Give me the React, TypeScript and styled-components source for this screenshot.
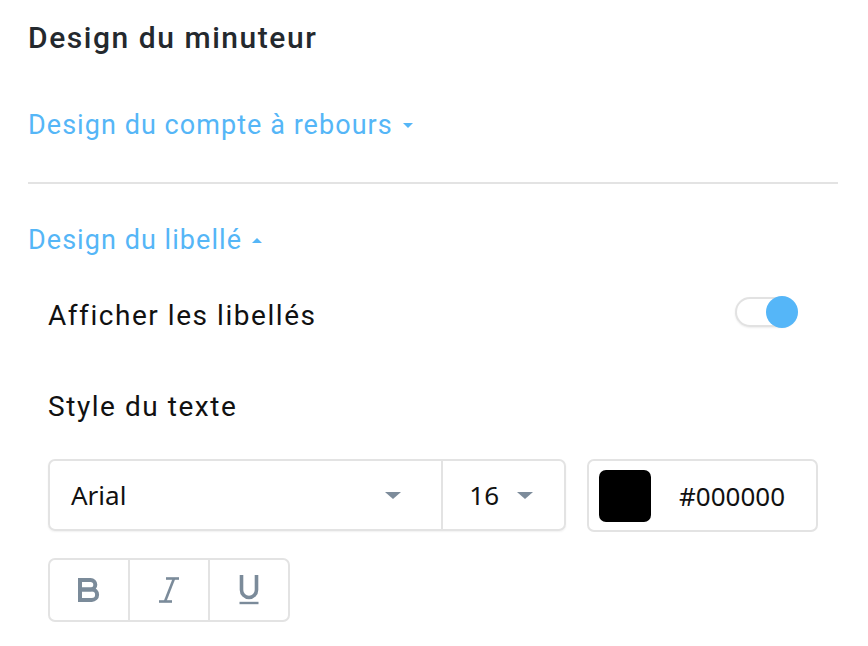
import React, { useState } from "react";
import styled, { createGlobalStyle } from "styled-components";

const Global = createGlobalStyle`
  html, body { margin: 0; padding: 0; background: #fff; }
  body { font-family: Roboto, "Noto Sans", sans-serif; }
  * { box-sizing: border-box; }
`;

const Page = styled.div`
  width: 868px;
  padding: 18px 30px 20px 28px;
`;

const Title = styled.h1`
  margin: 0;
  font-family: Roboto, sans-serif;
  font-size: 30px;
  letter-spacing: 1.55px;
  font-weight: 500;
  line-height: 40px;
  color: #24292e;
`;

const Section = styled.div<{ $divider?: boolean }>`
  border-bottom: ${(p) => (p.$divider ? "2px solid #e3e3e3" : "none")};
`;

const AccordionHeader = styled.button<{ $top: number; $bottom?: number }>`
  display: flex;
  align-items: center;
  gap: 10px;
  padding: 0;
  margin: ${(p) => p.$top}px 0 ${(p) => p.$bottom ?? 0}px 0;
  border: none;
  background: none;
  cursor: pointer;
  font-family: Roboto, sans-serif;
  font-size: 27px;
  letter-spacing: 1.05px;
  font-weight: 400;
  color: #55b6f7;
  height: 56px;
`;

const Caret = styled.span<{ $up?: boolean; $color: string; $w?: number; $h?: number }>`
  display: inline-block;
  width: 0;
  height: 0;
  border-left: ${(p) => p.$w ?? 5}px solid transparent;
  border-right: ${(p) => p.$w ?? 5}px solid transparent;
  ${(p) =>
    p.$up
      ? `border-bottom: ${p.$h ?? 5}px solid ${p.$color};`
      : `border-top: ${p.$h ?? 5}px solid ${p.$color};`}
`;

const Content = styled.div`
  padding: 0 20px;
`;

const Row = styled.div`
  display: flex;
  align-items: center;
  justify-content: space-between;
  height: 96px;
`;

const Label = styled.div<{ $top?: number }>`
  margin-top: ${(p) => p.$top ?? 0}px;
  font-family: Roboto, sans-serif;
  font-size: 28px;
  letter-spacing: 1.55px;
  line-height: 40px;
  color: #111;
`;

const Track = styled.div`
  position: relative;
  width: 62px;
  height: 30px;
  border: 2px solid #e2e2e2;
  border-radius: 15px;
  background: #fff;
  box-shadow: 0 1px 2px rgba(0, 0, 0, 0.08);
  margin-right: 21px;
  margin-bottom: 8px;
  cursor: pointer;
`;

const Knob = styled.div<{ $on: boolean }>`
  position: absolute;
  top: -3px;
  left: ${(p) => (p.$on ? "29px" : "-3px")};
  width: 32px;
  height: 32px;
  border-radius: 50%;
  background: #55b6f8;
`;

const Controls = styled.div`
  display: flex;
  gap: 21px;
  margin-top: 32px;
`;

const SelectGroup = styled.div`
  display: flex;
  width: 518px;
  height: 72px;
  border: 2px solid #e3e3e3;
  border-radius: 7px;
  box-shadow: 0 1px 2px rgba(0, 0, 0, 0.06);
`;

const SelectCell = styled.div<{ $width: number; $padLeft: number; $gap: number; $last?: boolean }>`
  display: flex;
  align-items: center;
  width: ${(p) => p.$width}px;
  padding-left: ${(p) => p.$padLeft}px;
  padding-right: ${(p) => p.$gap}px;
  justify-content: space-between;
  border-right: ${(p) => (p.$last ? "none" : "2px solid #e3e3e3")};
`;

const SelectText = styled.span`
  font-family: "Noto Sans", sans-serif;
  font-size: 26px;
  color: #111;
`;

const ColorBox = styled.div`
  display: flex;
  align-items: center;
  width: 231px;
  height: 73px;
  border: 2px solid #e3e3e3;
  border-radius: 7px;
  padding-left: 10px;
  gap: 28px;
`;

const Swatch = styled.div<{ $color: string }>`
  width: 52px;
  height: 52px;
  border-radius: 7px;
  background: ${(p) => p.$color};
`;

const Toolbar = styled.div`
  display: inline-flex;
  margin-top: 26px;
  height: 64px;
  border: 2px solid #e3e3e3;
  border-radius: 7px;
`;

const FmtButton = styled.button<{ $last?: boolean }>`
  width: ${(p) => (p.$last ? 78 : 80)}px;
  height: 100%;
  border: none;
  border-right: ${(p) => (p.$last ? "none" : "2px solid #e3e3e3")};
  background: none;
  display: flex;
  align-items: center;
  justify-content: center;
  color: #7b8b9a;
  cursor: pointer;
  padding: 0;
`;

const BoldIcon = () => (
  <svg width="23" height="24" viewBox="0 0 23 24" fill="none" stroke="currentColor" strokeWidth="4" strokeLinejoin="miter">
    <path d="M2 2 H12.6 a4.7 4.7 0 0 1 0 9.4 H2 Z" />
    <path d="M2 11.4 H13.8 a5.3 5.3 0 0 1 0 10.6 H2 Z" />
  </svg>
);

const ItalicIcon = () => (
  <svg width="24" height="28" viewBox="0 0 24 28" fill="none" stroke="currentColor" strokeWidth="2.6" strokeLinecap="butt">
    <path d="M9 2.5 H22" />
    <path d="M2 25.5 H15" />
    <path d="M17 2.5 L8 25.5" />
  </svg>
);

const UnderlineIcon = () => (
  <svg width="22" height="30" viewBox="0 0 22 30" fill="none" stroke="currentColor" strokeWidth="3.6">
    <path d="M3.5 0 V15 a7.5 7.5 0 0 0 15 0 V0" />
    <path d="M1.5 28 H20.5" strokeWidth="2.4" />
  </svg>
);

export default function App() {
  const [on, setOn] = useState(true);
  return (
    <>
      <Global />
      <Page>
        <Title>Design du minuteur</Title>
        <Section $divider>
          <AccordionHeader $top={39} $bottom={29}>
            Design du compte à rebours <Caret $color="#55b6f7" />
          </AccordionHeader>
        </Section>
        <Section>
          <AccordionHeader $top={28}>
            Design du libellé <Caret $up $color="#55b6f7" />
          </AccordionHeader>
          <Content>
            <Row>
              <Label>Afficher les libellés</Label>
              <Track onClick={() => setOn(!on)}>
                <Knob $on={on} />
              </Track>
            </Row>
            <Label $top={23}>Style du texte</Label>
            <Controls>
              <SelectGroup>
                <SelectCell $width={395} $padLeft={21} $gap={40}>
                  <SelectText>Arial</SelectText>
                  <Caret $color="#7d8c9b" $w={8} $h={7} />
                </SelectCell>
                <SelectCell $width={121} $padLeft={26} $gap={31} $last>
                  <SelectText>16</SelectText>
                  <Caret $color="#7d8c9b" $w={8} $h={7} />
                </SelectCell>
              </SelectGroup>
              <ColorBox>
                <Swatch $color="#000000" />
                <SelectText>#000000</SelectText>
              </ColorBox>
            </Controls>
            <Toolbar>
              <FmtButton aria-label="Gras"><BoldIcon /></FmtButton>
              <FmtButton aria-label="Italique"><ItalicIcon /></FmtButton>
              <FmtButton $last aria-label="Souligné"><UnderlineIcon /></FmtButton>
            </Toolbar>
          </Content>
        </Section>
      </Page>
    </>
  );
}
